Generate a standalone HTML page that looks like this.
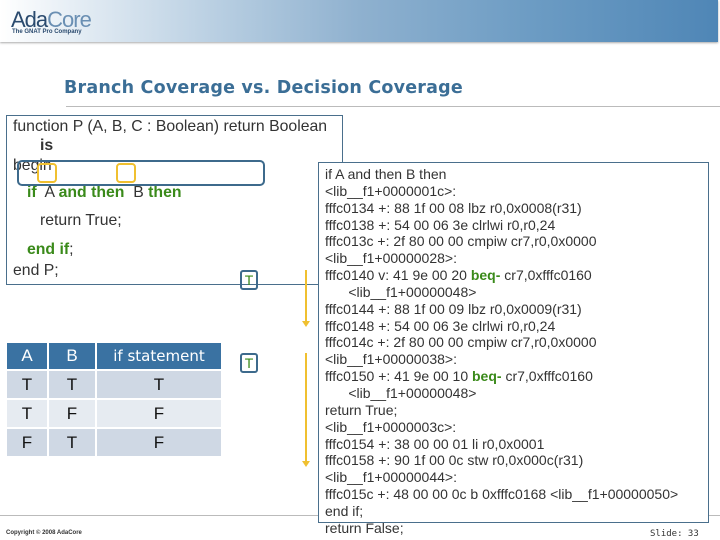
<!DOCTYPE html>
<html><head><meta charset="utf-8"><style>
body{margin:0;width:720px;height:540px;position:relative;background:#fff;font-family:"Liberation Sans",sans-serif;overflow:hidden}
.a{position:absolute}
.hdr{left:0;top:0;width:718px;height:42px;background:linear-gradient(90deg,#fff 0%,#e6eef5 10%,#b9cfe2 30%,#8fb1cf 50%,#6b9bc3 75%,#4f86b6 100%);box-shadow:0 1px 2px #aaa}
.code{color:#333;font-size:15.8px;line-height:16px}
.g{color:#3a8a1a;font-weight:bold}
td{text-align:center;font-size:17px;color:#111;padding:0}
</style></head><body>
<div class="a hdr"></div>
<div class="a" style="left:11px;top:7px;font-size:22px;color:#2a4a6e;letter-spacing:-1px">Ada<span style="color:#6a8fb3">Core</span></div>
<div class="a" style="left:12px;top:29px;font-size:6px;font-weight:bold;color:#2a4a6e">The GNAT Pro Company</div>
<div class="a" style="left:64px;top:78px;font-size:17.5px;font-weight:bold;color:#3b6e96;font-family:'DejaVu Sans',sans-serif;letter-spacing:0.2px">Branch Coverage vs. Decision Coverage</div>
<div class="a" style="left:66px;top:106px;width:654px;height:1px;background:#bbb"></div>
<div class="a" style="left:0;top:515px;width:720px;height:1px;background:#bbb"></div>

<div class="a" style="left:6px;top:115px;width:335px;height:168px;border:1px solid #4a6f8c"></div>
<div class="a code" style="left:13px;top:119px">function P (A, B, C : Boolean) return Boolean</div>
<div class="a code" style="left:40px;top:138px;font-weight:bold">is</div>
<div class="a code" style="left:13px;top:158px">begin</div>
<div class="a code" style="left:27px;top:185px"><span class="g">if</span>&nbsp; A <span class="g">and then</span>&nbsp; B <span class="g">then</span></div>
<div class="a code" style="left:40px;top:213px">return True;</div>
<div class="a code" style="left:27px;top:242px"><span class="g">end if</span>;</div>
<div class="a code" style="left:13px;top:263px">end P;</div>

<div class="a" style="left:17px;top:160px;width:244px;height:22px;border:2.5px solid #3d6a8c;border-radius:5px"></div>
<div class="a" style="left:37px;top:163px;width:16px;height:16px;border:2.5px solid #f0c030;border-radius:4px"></div>
<div class="a" style="left:116px;top:163px;width:16px;height:16px;border:2.5px solid #f0c030;border-radius:4px"></div>

<div class="a" style="left:240px;top:270px;width:14px;height:16px;border:2.5px solid #3d6a8c;border-radius:3px;color:#3a8a1a;font-size:14px;text-align:center;line-height:16px">T</div>
<div class="a" style="left:240px;top:353px;width:14px;height:16px;border:2.5px solid #3d6a8c;border-radius:3px;color:#3a8a1a;font-size:14px;text-align:center;line-height:16px">T</div>

<div class="a" style="left:305px;top:270px;width:2px;height:53px;background:#f0c030"></div>
<div class="a" style="left:302px;top:321px;width:0;height:0;border-left:4px solid transparent;border-right:4px solid transparent;border-top:6px solid #f0c030"></div>
<div class="a" style="left:305px;top:353px;width:2px;height:110px;background:#f0c030"></div>
<div class="a" style="left:302px;top:461px;width:0;height:0;border-left:4px solid transparent;border-right:4px solid transparent;border-top:6px solid #f0c030"></div>

<table class="a" style="left:7px;top:343px;border-collapse:separate;border-spacing:2px;margin:-2px">
<tr style="height:26px;background:#3a72a2"><td style="width:40px;color:#fff">A</td><td style="width:46px;color:#fff">B</td><td style="width:124px;color:#fff;font-family:'DejaVu Sans',sans-serif;font-size:15px">if statement</td></tr>
<tr style="height:27px;background:#cfd8e4"><td>T</td><td>T</td><td>T</td></tr>
<tr style="height:27px;background:#e6ebf1"><td>T</td><td>F</td><td>F</td></tr>
<tr style="height:27px;background:#cfd8e4"><td>F</td><td>T</td><td>F</td></tr>
</table>

<div class="a" style="left:318px;top:162px;width:389px;height:359px;border:1px solid #4a6f8c;background:#fff"></div>
<div class="a code" style="left:325px;top:166px;font-size:14px;line-height:16.85px;white-space:pre">if A and then B then
&lt;lib__f1+0000001c&gt;:
fffc0134 +: 88 1f 00 08 lbz r0,0x0008(r31)
fffc0138 +: 54 00 06 3e clrlwi r0,r0,24
fffc013c +: 2f 80 00 00 cmpiw cr7,r0,0x0000
&lt;lib__f1+00000028&gt;:
fffc0140 v: 41 9e 00 20 <span class="g">beq-</span> cr7,0xfffc0160
      &lt;lib__f1+00000048&gt;
fffc0144 +: 88 1f 00 09 lbz r0,0x0009(r31)
fffc0148 +: 54 00 06 3e clrlwi r0,r0,24
fffc014c +: 2f 80 00 00 cmpiw cr7,r0,0x0000
&lt;lib__f1+00000038&gt;:
fffc0150 +: 41 9e 00 10 <span class="g">beq-</span> cr7,0xfffc0160
      &lt;lib__f1+00000048&gt;
return True;
&lt;lib__f1+0000003c&gt;:
fffc0154 +: 38 00 00 01 li r0,0x0001
fffc0158 +: 90 1f 00 0c stw r0,0x000c(r31)
&lt;lib__f1+00000044&gt;:
fffc015c +: 48 00 00 0c b 0xfffc0168 &lt;lib__f1+00000050&gt;
end if;
return False;</div>
<div class="a" style="left:6px;top:530px;font-size:6px;font-weight:bold;color:#333">Copyright © 2008 AdaCore</div>
<div class="a" style="left:650px;top:529px;font-size:9px;color:#333;font-family:'DejaVu Sans Mono',monospace">Slide: 33</div>
</body></html>
